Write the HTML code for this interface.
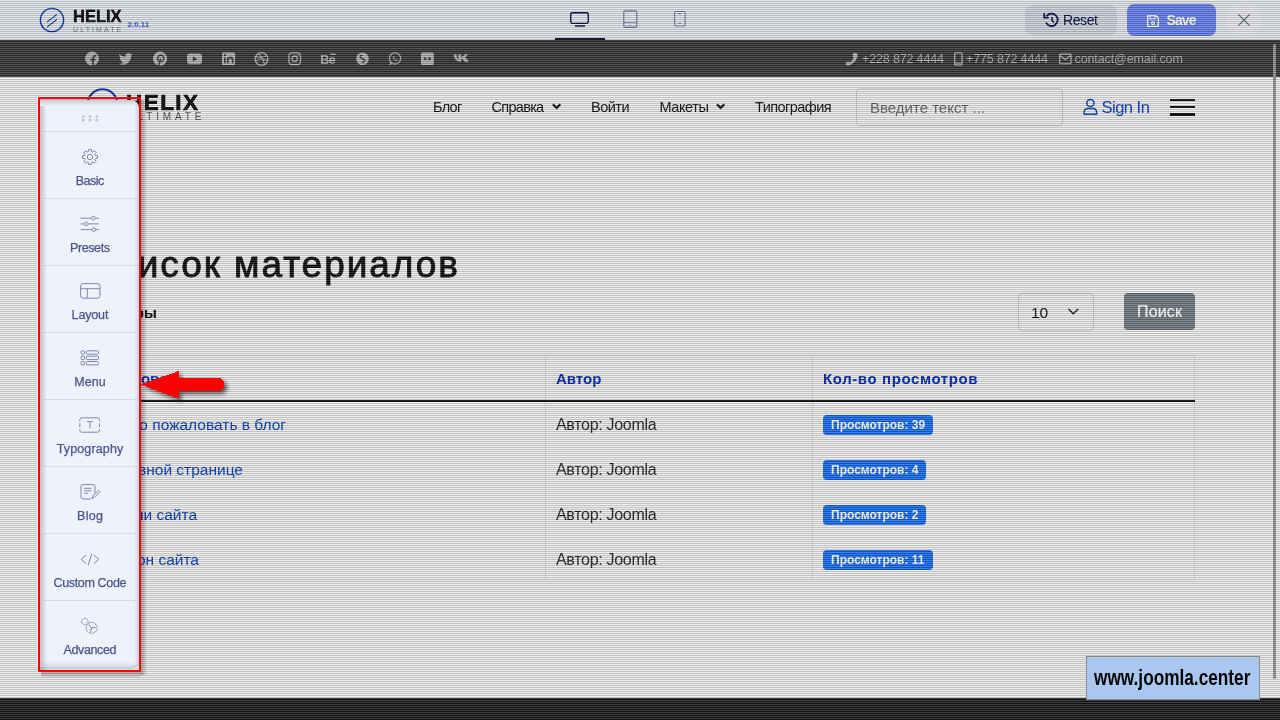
<!DOCTYPE html>
<html><head><meta charset="utf-8">
<style>
html,body{margin:0;padding:0;}
body{width:1280px;height:720px;overflow:hidden;position:relative;background:#efefef;font-family:"Liberation Sans",sans-serif;}
.a{position:absolute;}
.t{position:absolute;white-space:nowrap;line-height:1;}
svg{position:absolute;overflow:visible;}
#L0{position:absolute;left:0;top:0;width:1280px;height:720px;z-index:0;}
.ov{position:absolute;z-index:1;mix-blend-mode:difference;background:repeating-linear-gradient(to bottom,rgba(0,0,0,0) 0px,rgba(0,0,0,0) 1px,rgb(47,47,47) 1px,rgb(47,47,47) 2px);pointer-events:none;}
#L2{position:absolute;left:0;top:0;width:1280px;height:720px;z-index:2;}
</style></head><body>
<div id="L0">
  <!-- top admin bar -->
  <div class="a" style="left:0;top:0;width:1280px;height:40px;background:#e5e8ed;"></div>
  <!-- admin logo -->
  <svg style="left:0;top:0" width="1" height="1">
    <circle cx="52" cy="20" r="11.6" fill="none" stroke="#1d4db3" stroke-width="1.4"/>
    <path d="M47.1 22 Q49.5 20 51.5 18.6 Q54 17.2 56.7 14.4 M47.2 27.2 Q49.8 24.5 52 23.2 Q54.5 21.8 57 19.2" stroke="#1d4db3" stroke-width="1.05" fill="none"/>
  </svg>
  <div class="t" id="hx1" style="left:73px;top:7.5px;font-size:16.5px;font-weight:bold;color:#111;-webkit-text-stroke:0.35px #111;">HELIX</div>
  <div class="t" id="ult1" style="left:73px;top:25.5px;font-size:7px;letter-spacing:2.1px;color:#8a8a8a;">ULTIMATE</div>
  <div class="t" id="ver" style="left:127.5px;top:20.5px;font-size:8px;font-weight:bold;color:#4d6fe2;">2.0.11</div>
  <!-- device icons -->
  <svg style="left:0;top:0" width="1" height="1">
    <rect x="570.7" y="12.7" width="17.6" height="10.6" rx="1.8" fill="none" stroke="#1c2455" stroke-width="1.35"/>
    <rect x="575" y="25" width="10" height="2" fill="#5a618a"/>
    <rect x="623.75" y="10.75" width="13" height="16.5" rx="2" fill="none" stroke="#8e94ae" stroke-width="1.3"/>
    <path d="M624 22.5 H636.5" stroke="#8e94ae" stroke-width="1"/>
    <rect x="629.5" y="24.5" width="1.5" height="1.2" fill="#8e94ae"/>
    <rect x="674.6" y="11.5" width="10.5" height="14.5" rx="2" fill="none" stroke="#8e94ae" stroke-width="1.2"/>
    <path d="M678 13.8 H681.5 M678.5 23.5 H681" stroke="#8e94ae" stroke-width="1"/>
  </svg>
  <div class="a" style="left:555px;top:38px;width:50px;height:2px;background:#0e1a4c;"></div>
  <!-- reset -->
  <div class="a" style="left:1025px;top:5px;width:92px;height:30px;border-radius:7px;background:#d4d8e1;"></div>
  <svg style="left:0;top:0" width="1" height="1">
    <path d="M1046.5 16.2 A6.2 6.2 0 1 1 1045.9 22.5" fill="none" stroke="#1e2657" stroke-width="1.7"/>
    <path d="M1044.2 13.2 V17.6 H1048.6" fill="none" stroke="#1e2657" stroke-width="1.7"/>
    <path d="M1052 17 V20.5 L1054 22.5" fill="none" stroke="#1e2657" stroke-width="1.5"/>
  </svg>
  <div class="t" id="reset" style="left:1063px;top:12.8px;font-size:14px;letter-spacing:-0.4px;color:#1e2657;">Reset</div>
  <!-- save -->
  <div class="a" style="left:1127px;top:4px;width:89px;height:31.5px;border-radius:7px;background:#7a92eb;"></div>
  <svg style="left:0;top:0" width="1" height="1">
    <path d="M1147.7 15.7 H1156 L1158.3 18 V26.3 H1147.7 Z" fill="none" stroke="#fff" stroke-width="1.3"/>
    <path d="M1150 15.7 V19 H1155 V15.7" fill="none" stroke="#fff" stroke-width="1.1"/>
    <circle cx="1153" cy="23" r="1.4" fill="none" stroke="#fff" stroke-width="1.1"/>
  </svg>
  <div class="t" id="save" style="left:1166.5px;top:12.9px;font-size:14px;font-weight:bold;letter-spacing:-0.9px;color:#fff;">Save</div>
  <!-- close -->
  <div class="a" style="left:1226px;top:2px;width:36px;height:36px;border-radius:18px;background:#eaecf0;"></div>
  <svg style="left:0;top:0" width="1" height="1">
    <path d="M1238.5 14.5 L1249.5 25.5 M1249.5 14.5 L1238.5 25.5" stroke="#7b8092" stroke-width="1.2"/>
  </svg>

  <!-- social bar -->
  <div class="a" style="left:0;top:40px;width:1280px;height:37px;background:#555555;"></div>
  <div class="a" style="left:0;top:40px;width:1280px;height:1px;background:#46444f;"></div>
  <svg style="left:0;top:0" width="1" height="1">
    <g fill="#bbbbbb">
      <circle cx="92" cy="58.6" r="7"/>
      <path d="M132.6 54.6 L131.2 55.4 Q131.5 54.2 132.2 53.3 L130.4 54 Q129 52.8 127.1 53.2 Q124.9 53.9 125.2 56.8 Q121.8 56.6 119.4 53.9 Q118.6 56.4 120.6 58.1 L119.6 57.9 Q119.9 60.1 121.9 60.7 L120.8 60.8 Q121.6 62.3 123.5 62.5 Q121.6 63.9 118.9 63.7 Q124.4 66.4 128.5 62.6 Q131.3 59.6 131.2 56 Z"/>
      <circle cx="160" cy="58.7" r="7.1"/>
      <rect x="187" y="53.6" width="15" height="10.6" rx="3"/>
      <rect x="222" y="52.4" width="13" height="12.5" rx="1"/>
      <rect x="421" y="52.5" width="12.8" height="12.5" rx="1.5"/>
      <path d="M453.5 54.3 Q454.5 61.8 460.8 61.8 L461.2 61.8 V58.4 Q463 58.8 464.6 61.8 H468.8 Q467.2 58.6 465 57.6 Q466.9 56.2 468.2 54.3 H464.7 Q463.3 56.8 461.2 57.3 V54.3 H458.3 V59.3 Q456.7 58.6 456.6 54.3 Z"/>
      <circle cx="362.5" cy="58.8" r="6.3"/>
    </g>
    <g fill="none" stroke="#555" stroke-width="1.8">
      <path d="M93 66 V58.5 Q93 55.8 95.6 55.8 H96.2 M90.2 59.7 H95.6"/>
      <path d="M158.7 66 L160.6 58.4" stroke-width="1.5"/>
      <path d="M158.6 61.3 Q156.6 58.7 158.4 56.3 Q160.8 54.2 163.1 56.1 Q164.7 58.6 162.9 60.8 Q161.6 62 160.1 61.2" stroke-width="1.4"/>
      <path d="M227.9 63.3 V57.4 M227.9 59.6 Q228.6 57.4 230.6 57.4 Q232.6 57.4 232.6 60 V63.3 M224.9 57.4 V63.3" stroke-width="1.7"/>
      <path d="M362.6 55.4 Q360.3 55 360.2 56.8 Q360.3 58.3 362.6 58.8 Q364.8 59.3 364.7 60.8 Q364.4 62.6 361.8 62.3" stroke-width="1.4"/>
    </g>
    <g fill="#555">
      <circle cx="224.9" cy="55.2" r="1.1"/>
      <path d="M192.8 56.3 L197.4 58.9 L192.8 61.5 Z"/>
      <rect x="423.8" y="57.4" width="2.6" height="2.6"/>
      <rect x="428.2" y="57.4" width="2.6" height="2.6"/>
    </g>
    <g fill="none" stroke="#bbbbbb" stroke-width="1.3">
      <circle cx="261.5" cy="59" r="6.4"/>
      <path d="M255.6 56.2 Q261.5 59 266.6 55.4 M258.2 53.3 Q263.5 58.5 264.6 65 M255.3 61.6 Q260.5 57 267.6 60.6" stroke-width="1.1"/>
      <rect x="288.9" y="52.9" width="11.6" height="11.6" rx="3.3"/>
      <circle cx="294.7" cy="58.7" r="2.7"/>
      <circle cx="395" cy="58.4" r="5.6"/>
    </g>
    <path d="M389.2 65.2 L390.4 61.6 L392.6 63.8 Z" fill="#bbbbbb"/>
    <path d="M392.9 56.4 Q392.6 59.6 396.3 61 Q397.5 61.2 397.9 60.2 L396.6 59.4 L395.9 60 Q394.5 59.3 393.9 57.9 L394.5 57.3 L393.8 56 Z" fill="#bbbbbb"/>
    <circle cx="297.9" cy="55.5" r="0.8" fill="#bbbbbb"/>
    <text x="320.3" y="63.6" font-family="Liberation Sans" font-weight="bold" font-size="12.6" fill="#bbbbbb" letter-spacing="-0.6">Be</text>
    <rect x="330.5" y="53.6" width="5.3" height="1.3" fill="#bbbbbb"/>
  </svg>
  <!-- contact -->
  <svg style="left:0;top:0" width="1" height="1">
    <path d="M853.3 53 L856.3 52.9 Q858.3 53.6 857.3 57 Q855.6 62.5 849.6 65.3 Q846.5 66 845.6 64.2 L846.1 62.2 Q848.3 61 850.3 62.4 Q852.8 60 853.6 57.4 Q851.9 56.2 853.3 53 Z" fill="#bbbbbb"/>
    <rect x="954.7" y="52.9" width="7.3" height="12.2" rx="1.2" fill="none" stroke="#bbbbbb" stroke-width="1.3"/>
    <path d="M955 63.2 H961.6" stroke="#bbbbbb" stroke-width="1.2"/>
    <rect x="1059.6" y="54.2" width="11.4" height="9.4" rx="0.8" fill="none" stroke="#bbbbbb" stroke-width="1.3"/>
    <path d="M1059.9 55.4 L1065.3 59.6 L1070.7 55.4" fill="none" stroke="#bbbbbb" stroke-width="1.3"/>
  </svg>
  <div class="t" id="ph1" style="left:862px;top:53.2px;font-size:12.5px;letter-spacing:-0.15px;color:#b8b8b8;">+228 872 4444</div>
  <div class="t" id="ph2" style="left:966px;top:53.2px;font-size:12.5px;letter-spacing:-0.15px;color:#b8b8b8;">+775 872 4444</div>
  <div class="t" id="mail" style="left:1074.5px;top:53.2px;font-size:12.5px;letter-spacing:-0.1px;color:#b8b8b8;">contact@email.com</div>

  <!-- nav logo -->
  <svg style="left:0;top:0" width="1" height="1">
    <circle cx="102.5" cy="104" r="14.8" fill="none" stroke="#1a48b8" stroke-width="2"/>
  </svg>
  <div class="t" id="hx2" style="left:126px;top:91.9px;font-size:22.5px;font-weight:bold;letter-spacing:1.45px;color:#111;-webkit-text-stroke:0.5px #111;">HELIX</div>
  <div class="t" id="ult2" style="left:126.5px;top:112.3px;font-size:10px;letter-spacing:3.85px;color:#666;">ULTIMATE</div>

  <!-- nav menu -->
  <div class="t" id="m1" style="left:433px;top:100.3px;font-size:14.5px;letter-spacing:-0.7px;color:#333;">Блог</div>
  <div class="t" id="m2" style="left:491.5px;top:100.3px;font-size:14.5px;letter-spacing:-0.7px;color:#333;">Справка</div>
  <div class="t" id="m3" style="left:591px;top:100.3px;font-size:14.5px;letter-spacing:-0.5px;color:#333;">Войти</div>
  <div class="t" id="m4" style="left:659.5px;top:100.3px;font-size:14.5px;letter-spacing:-0.4px;color:#333;">Макеты</div>
  <div class="t" id="m5" style="left:755px;top:100.3px;font-size:14.5px;letter-spacing:-0.55px;color:#333;">Типография</div>
  <svg style="left:0;top:0" width="1" height="1">
    <path d="M552.9 104.3 L556.6 108 L560.3 104.3 M716.9 104.3 L720.6 108 L724.3 104.3" fill="none" stroke="#2e2e2e" stroke-width="2.2"/>
  </svg>
  <!-- search -->
  <div class="a" style="left:856px;top:88px;width:205px;height:36px;border:1px solid #cbcfd6;border-radius:4px;"></div>
  <div class="t" id="srch" style="left:870px;top:99.5px;font-size:15px;color:#7a7a7a;">Введите текст ...</div>
  <svg style="left:0;top:0" width="1" height="1">
    <circle cx="1090.4" cy="103" r="3.6" fill="none" stroke="#2457c9" stroke-width="1.5"/>
    <path d="M1084.2 114.3 V112.6 Q1084.2 108.6 1088 108.6 H1092.8 Q1096.6 108.6 1096.6 112.6 V114.3 Z" fill="none" stroke="#2457c9" stroke-width="1.5"/>
  </svg>
  <div class="t" id="signin" style="left:1101.5px;top:99px;font-size:16.5px;letter-spacing:-0.5px;color:#2457c9;">Sign In</div>
  <div class="a" style="left:1170px;top:98.5px;width:25px;height:2.5px;background:#111;"></div>
  <div class="a" style="left:1170px;top:105.8px;width:25px;height:2.5px;background:#111;"></div>
  <div class="a" style="left:1170px;top:113px;width:25px;height:2.5px;background:#111;"></div>

  <!-- content -->
  <div class="t" id="h1" style="left:87px;top:246px;font-size:37px;letter-spacing:1.95px;color:#303030;-webkit-text-stroke:0.8px #303030;">Список материалов</div>
  <div class="t" id="filt" style="left:88px;top:305px;font-size:15px;font-weight:bold;color:#222;">Фильтры</div>
  <!-- select -->
  <div class="a" style="left:1018px;top:293px;width:74px;height:36px;border:1px solid #cbcfd6;border-radius:4px;"></div>
  <div class="t" id="sel" style="left:1031px;top:304.5px;font-size:15.5px;color:#333;">10</div>
  <svg style="left:0;top:0" width="1" height="1">
    <path d="M1068.5 309 L1073.3 313.8 L1078.1 309" fill="none" stroke="#333" stroke-width="1.3"/>
  </svg>
  <div class="a" style="left:1124px;top:293px;width:71px;height:37px;border-radius:4px;background:#868c94;"></div>
  <div class="t" id="btn" style="left:1137px;top:304.2px;font-size:16px;letter-spacing:0.15px;color:#fff;-webkit-text-stroke:0.2px #fff;">Поиск</div>
  <!-- table -->
  <div class="a" style="left:545px;top:355px;width:1px;height:226px;background:#dcdcdc;"></div>
  <div class="a" style="left:812px;top:355px;width:1px;height:226px;background:#dcdcdc;"></div>
  <div class="a" style="left:1194px;top:355px;width:1px;height:226px;background:#dcdcdc;"></div>
  <div class="a" style="left:85px;top:355px;width:1110px;height:1px;background:#dcdcdc;"></div>
  <div class="a" style="left:85px;top:580px;width:1110px;height:1px;background:#e6e6e6;"></div>
  <div class="a" style="left:85px;top:400px;width:1110px;height:2px;background:#1e1e1e;"></div>
  <div class="t" id="th1" style="left:99px;top:371px;font-size:15px;font-weight:bold;color:#1a47b8;">Заголовок</div>
  <div class="t" id="th2" style="left:556px;top:371px;font-size:15px;font-weight:bold;color:#1a47b8;">Автор</div>
  <div class="t" id="th3" style="left:823px;top:371px;font-size:15px;font-weight:bold;letter-spacing:0.6px;color:#1a47b8;">Кол-во просмотров</div>
  <div class="t" id="r1" style="right:994px;top:417.4px;font-size:15.5px;color:#2457c9;">Добро пожаловать в блог</div>
  <div class="t" id="r2" style="right:1037px;top:462.4px;font-size:15.5px;color:#2457c9;">О главной странице</div>
  <div class="t" id="r3" style="right:1083px;top:507.4px;font-size:15.5px;color:#2457c9;">Модули сайта</div>
  <div class="t" id="r4" style="right:1081px;top:552.4px;font-size:15.5px;color:#2457c9;">Шаблон сайта</div>
  <div class="t" id="a1" style="left:556px;top:416.8px;font-size:16px;letter-spacing:-0.3px;color:#444;">Автор: Joomla</div>
  <div class="t" id="a2" style="left:556px;top:461.8px;font-size:16px;letter-spacing:-0.3px;color:#444;">Автор: Joomla</div>
  <div class="t" id="a3" style="left:556px;top:506.8px;font-size:16px;letter-spacing:-0.3px;color:#444;">Автор: Joomla</div>
  <div class="t" id="a4" style="left:556px;top:551.8px;font-size:16px;letter-spacing:-0.3px;color:#444;">Автор: Joomla</div>
  <div class="a" style="left:823px;top:415px;width:110px;height:20px;border-radius:4px;background:#3a81ee;"></div>
  <div class="a" style="left:823px;top:460px;width:103px;height:20px;border-radius:4px;background:#3a81ee;"></div>
  <div class="a" style="left:823px;top:505px;width:103px;height:20px;border-radius:4px;background:#3a81ee;"></div>
  <div class="a" style="left:823px;top:550px;width:110px;height:20px;border-radius:4px;background:#3a81ee;"></div>
  <div class="t" id="b1" style="left:831px;top:418.5px;font-size:12px;font-weight:bold;color:#fff;">Просмотров: 39</div>
  <div class="t" id="b2" style="left:831px;top:463.5px;font-size:12px;font-weight:bold;color:#fff;">Просмотров: 4</div>
  <div class="t" id="b3" style="left:831px;top:508.5px;font-size:12px;font-weight:bold;color:#fff;">Просмотров: 2</div>
  <div class="t" id="b4" style="left:831px;top:553.5px;font-size:12px;font-weight:bold;color:#fff;">Просмотров: 11</div>

  <!-- red box outer shadow -->
  <div class="a" style="left:141px;top:100px;width:6px;height:575px;background:linear-gradient(to right,rgba(0,0,0,0.28),rgba(0,0,0,0));"></div>
  <div class="a" style="left:41px;top:672px;width:100px;height:6px;background:linear-gradient(to bottom,rgba(0,0,0,0.28),rgba(0,0,0,0));"></div>
  <svg style="left:0;top:0" width="1" height="1">
    <defs><filter id="ash" x="-20%" y="-50%" width="140%" height="200%"><feGaussianBlur stdDeviation="2.2"/></filter></defs>
    <path d="M143.5 387.5 L181.8 374 V381 H223 L227 385 V390 L223 394 H181.8 V401.8 Z" fill="rgba(0,0,0,0.55)" filter="url(#ash)"/>
  </svg>
  <!-- footer -->
  <div class="a" style="left:0;top:698px;width:1280px;height:22px;background:#404040;"></div>
  <!-- scrollbar -->
  <div class="a" style="left:1273px;top:44px;width:3px;height:635px;border-radius:2px;background:#a2a2a2;"></div>
</div>

<!-- scanline overlay excluding hole x37-141 y96-672 -->
<div class="ov" style="left:0;top:0;width:1280px;height:96px;"></div>
<div class="ov" style="left:0;top:672px;width:1280px;height:48px;"></div>
<div class="ov" style="left:0;top:96px;width:37px;height:576px;"></div>
<div class="ov" style="left:141px;top:96px;width:1139px;height:576px;"></div>

<div id="L2">
  <div class="a" id="crisp" style="left:0;top:0;width:1280px;height:720px;clip-path:inset(96px 1139px 48px 37px);">
    <div class="a" style="left:37px;top:96px;width:104px;height:576px;background:#efefef;"></div>
    <svg style="left:0;top:0" width="1" height="1">
      <circle cx="102.5" cy="104" r="14.8" fill="none" stroke="#1a48b8" stroke-width="2"/>
    </svg>
    <div class="t" style="left:126px;top:91.9px;font-size:22.5px;font-weight:bold;letter-spacing:1.45px;color:#111;-webkit-text-stroke:0.5px #111;">HELIX</div>
    <!-- panel -->
    <div class="a" style="left:30px;top:100px;width:109px;height:567px;border-radius:8px;background:#eef2fa;box-shadow:0 2px 5px rgba(60,70,110,0.3);"></div>
    <div class="a" id="dividers">
      <div class="a" style="left:43px;top:131px;width:94px;height:1px;background:#d6dcea;"></div>
      <div class="a" style="left:43px;top:198px;width:94px;height:1px;background:#d6dcea;"></div>
      <div class="a" style="left:43px;top:265px;width:94px;height:1px;background:#d6dcea;"></div>
      <div class="a" style="left:43px;top:332px;width:94px;height:1px;background:#d6dcea;"></div>
      <div class="a" style="left:43px;top:399px;width:94px;height:1px;background:#d6dcea;"></div>
      <div class="a" style="left:43px;top:466px;width:94px;height:1px;background:#d6dcea;"></div>
      <div class="a" style="left:43px;top:533px;width:94px;height:1px;background:#d6dcea;"></div>
      <div class="a" style="left:43px;top:600px;width:94px;height:1px;background:#d6dcea;"></div>
    </div>
    <svg style="left:0;top:0" width="1" height="1">
      <g fill="#bcc3d8">
        <circle cx="83.3" cy="116.6" r="1.4"/><circle cx="90" cy="116.6" r="1.4"/><circle cx="96.7" cy="116.6" r="1.4"/>
        <circle cx="83.3" cy="120.2" r="1.4"/><circle cx="90" cy="120.2" r="1.4"/><circle cx="96.7" cy="120.2" r="1.4"/>
      </g>
      <g fill="none" stroke="#7f88aa" stroke-width="1">
        <path d="M88.50 151.60 L88.66 149.52 L91.34 149.52 L91.50 151.60 L92.76 152.12 L94.35 150.76 L96.24 152.65 L94.88 154.24 L95.40 155.50 L97.48 155.66 L97.48 158.34 L95.40 158.50 L94.88 159.76 L96.24 161.35 L94.35 163.24 L92.76 161.88 L91.50 162.40 L91.34 164.48 L88.66 164.48 L88.50 162.40 L87.24 161.88 L85.65 163.24 L83.76 161.35 L85.12 159.76 L84.60 158.50 L82.52 158.34 L82.52 155.66 L84.60 155.50 L85.12 154.24 L83.76 152.65 L85.65 150.76 L87.24 152.12 Z"/>
        <circle cx="90" cy="157" r="2.7"/>
        <!-- presets -->
        <path d="M80.5 218.2 H98.8 M80.5 223.9 H98.8 M80.5 229.6 H98.8"/>
        <circle cx="93.4" cy="218.2" r="1.8" fill="#eef2fa"/>
        <circle cx="86.3" cy="223.9" r="1.8" fill="#eef2fa"/>
        <circle cx="93.8" cy="229.6" r="1.8" fill="#eef2fa"/>
        <!-- layout -->
        <rect x="80.6" y="283.6" width="19.4" height="14.6" rx="2.6"/>
        <path d="M80.6 288.7 H100 M87.3 288.7 V298.2"/>
        <!-- menu -->
        <rect x="81.2" y="350.8" width="3.4" height="3.4" rx="0.8"/>
        <rect x="81.2" y="356.2" width="3.4" height="3.4" rx="0.8"/>
        <rect x="81.2" y="361.5" width="3.4" height="3.4" rx="0.8"/>
        <rect x="86.3" y="350.8" width="12.2" height="3.4" rx="1"/>
        <rect x="86.3" y="356.2" width="12.2" height="3.4" rx="1"/>
        <rect x="86.3" y="361.5" width="12.2" height="3.4" rx="1"/>
        <!-- typography -->
        <path d="M79.8 421.3 V419.8 Q79.8 417.8 81.8 417.8 H97.5 Q99.5 417.8 99.5 419.8 V421.3 M79.8 423.3 V427 M99.5 423.3 V427 M79.8 429 V430.2 Q79.8 432.2 81.8 432.2 H97.5 Q99.5 432.2 99.5 430.2 V429"/>
        <path d="M87 421.6 H93 M90 421.6 V428.2"/>
        <!-- blog -->
        <path d="M95 493 V486.6 Q95 484.6 93 484.6 H83 Q81 484.6 81 486.6 V497 Q81 499 83 499 H91"/>
        <path d="M84 488.3 H91.5 M84 490.8 H91.5 M84 493.3 H88"/>
        <path d="M92 498.5 L93 495.8 L98.5 490.3 L100 491.8 L94.5 497.3 Z"/>
        <!-- custom code -->
        <path d="M86.2 555 L81.2 559.3 L86.2 563.6 M93.8 555 L98.8 559.3 L93.8 563.6 M91.8 553.6 L88.2 565.2"/>
        <!-- advanced -->
        <circle cx="84.9" cy="621.4" r="3.2" stroke-dasharray="1.6 0.5"/>
        <circle cx="91.6" cy="627.8" r="5.5" fill="#eef2fa" stroke-dasharray="1.8 0.6"/>
        <path d="M91.6 627.8 L88.6 624.6 M91.6 627.8 L95.6 627.4 M91.6 627.8 L90.4 632.6"/>
      </g>
    </svg>
    <div class="t" id="lb1" style="left:40px;width:100px;text-align:center;text-indent:-0.55px;top:174.7px;font-size:12.5px;letter-spacing:-0.55px;color:#4b568a;-webkit-text-stroke:0.25px #4b568a;">Basic</div>
    <div class="t" id="lb2" style="left:40px;width:100px;text-align:center;text-indent:-0.40px;top:241.7px;font-size:12.5px;letter-spacing:-0.40px;color:#4b568a;-webkit-text-stroke:0.25px #4b568a;">Presets</div>
    <div class="t" id="lb3" style="left:40px;width:100px;text-align:center;text-indent:-0.15px;top:308.7px;font-size:12.5px;letter-spacing:-0.15px;color:#4b568a;-webkit-text-stroke:0.25px #4b568a;">Layout</div>
    <div class="t" id="lb4" style="left:40px;width:100px;text-align:center;text-indent:0.00px;top:375.7px;font-size:12.5px;letter-spacing:0.00px;color:#4b568a;-webkit-text-stroke:0.25px #4b568a;">Menu</div>
    <div class="t" id="lb5" style="left:40px;width:100px;text-align:center;text-indent:0.15px;top:442.7px;font-size:12.5px;letter-spacing:0.15px;color:#4b568a;-webkit-text-stroke:0.25px #4b568a;">Typography</div>
    <div class="t" id="lb6" style="left:40px;width:100px;text-align:center;text-indent:0.30px;top:509.7px;font-size:12.5px;letter-spacing:0.30px;color:#4b568a;-webkit-text-stroke:0.25px #4b568a;">Blog</div>
    <div class="t" id="lb7" style="left:40px;width:100px;text-align:center;text-indent:-0.35px;top:576.7px;font-size:12.5px;letter-spacing:-0.35px;color:#4b568a;-webkit-text-stroke:0.25px #4b568a;">Custom Code</div>
    <div class="t" id="lb8" style="left:40px;width:100px;text-align:center;text-indent:-0.35px;top:643.7px;font-size:12.5px;letter-spacing:-0.35px;color:#4b568a;-webkit-text-stroke:0.25px #4b568a;">Advanced</div>
    <div class="a" style="left:134px;top:104px;width:5px;height:559px;background:linear-gradient(to right,rgba(80,90,130,0),rgba(80,90,130,0.2));"></div>
    <div class="a" style="left:40px;top:661px;width:99px;height:6px;border-radius:0 0 8px 8px;background:linear-gradient(to bottom,rgba(80,90,130,0),rgba(80,90,130,0.16));"></div>
    <!-- red box shadow inside (top/left) -->
    <div class="a" style="left:40px;top:99px;width:99px;height:7px;background:linear-gradient(to bottom,rgba(0,0,0,0.2),rgba(0,0,0,0));"></div>
    <div class="a" style="left:40px;top:106px;width:7px;height:564px;background:linear-gradient(to right,rgba(0,0,0,0.2),rgba(0,0,0,0));"></div>
    <!-- red box -->
    <div class="a" style="left:38px;top:97px;width:99px;height:571px;border:2px solid #ff0000;"></div>
  </div>
  <!-- arrow -->
  <svg style="left:0;top:0" width="1" height="1" shape-rendering="crispEdges">
    <path d="M140.5 384.5 L178.8 371 V378 H220 L224 382 V387 L220 391 H178.8 V398.8 Z" fill="#ff0000"/>
  </svg>
  <!-- watermark -->
  <div class="a" style="left:1086px;top:656px;width:172px;height:42px;border:1px solid #8a8a8a;background:#a8c8f0;"></div>
  <div class="t" id="wm" style="left:1093.5px;top:667px;font-size:22px;font-weight:bold;color:#050505;transform-origin:0 0;transform:scaleX(0.783);">www.joomla.center</div>
</div>
</body></html>
